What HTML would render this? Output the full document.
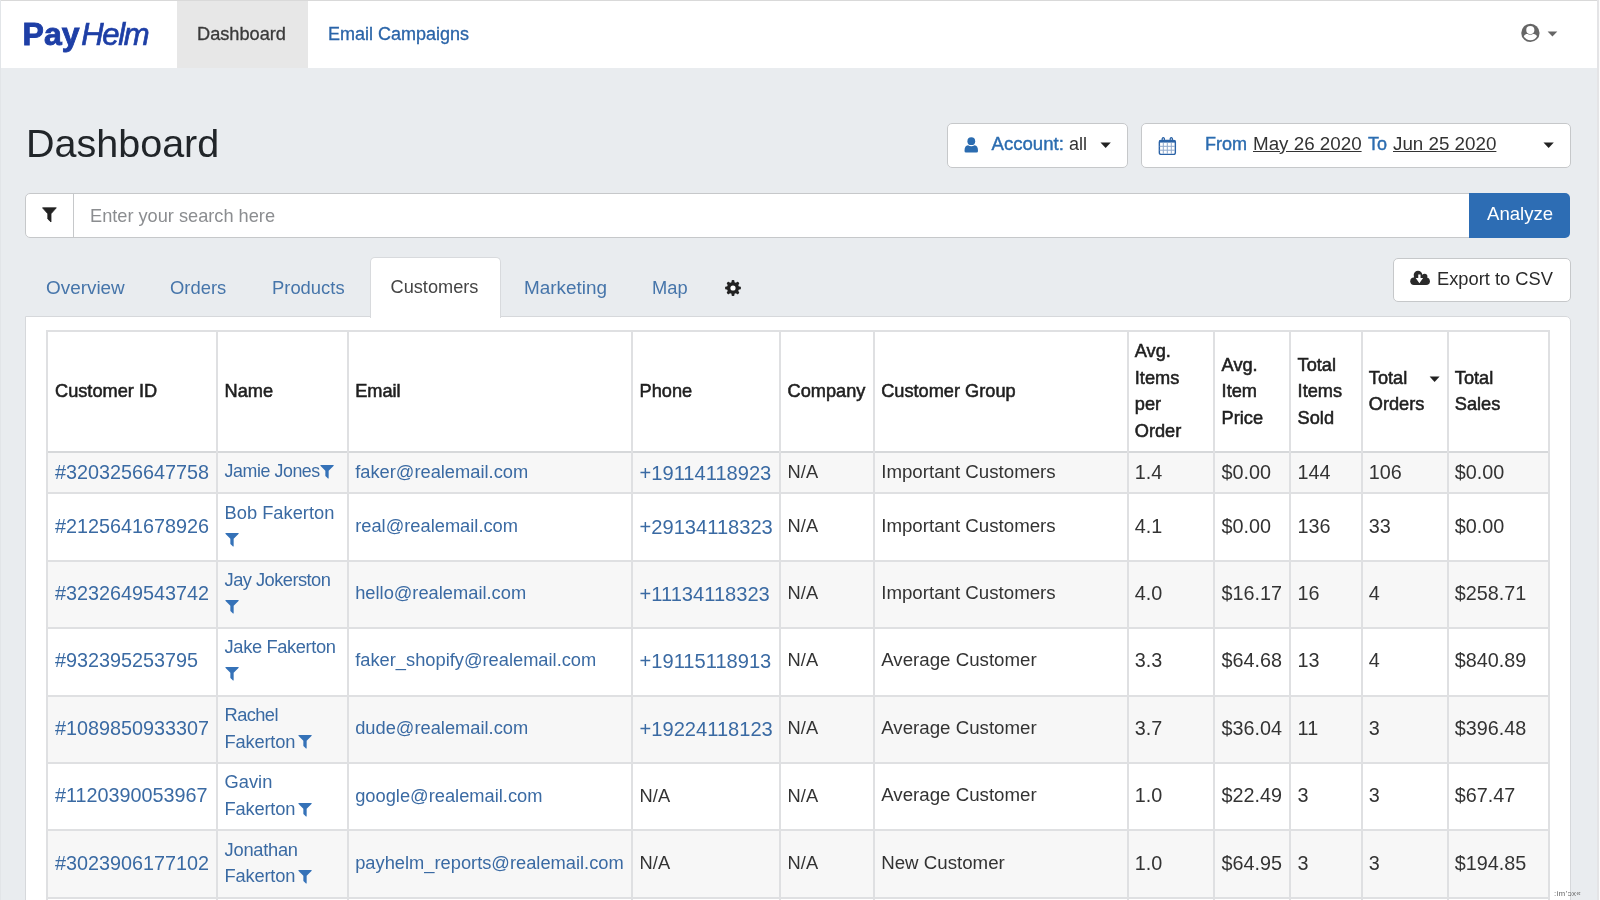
<!DOCTYPE html>
<html><head><meta charset="utf-8">
<style>
*{box-sizing:border-box}
html,body{margin:0;padding:0}
body{width:1600px;height:900px;overflow:hidden;position:relative;background:#e9ecef;font-family:"Liberation Sans",sans-serif;color:#212529}
.abs{position:absolute;white-space:nowrap}
.t{position:absolute;white-space:nowrap;line-height:1}
#topline{left:0;top:0;width:1600px;height:1px;background:#d9d9d9}
#nav{left:0;top:1px;width:1597px;height:67px;background:#fff}
#navact{left:177px;top:1px;width:131px;height:67px;background:#e7e7e7}
#rline{left:1597px;top:0;width:2px;height:900px;background:#e4e4e6}
#rwhite{left:1599px;top:0;width:1px;height:900px;background:#fbfbfb}
.btn{position:absolute;background:#fff;border:1px solid #c6c8ca;border-radius:5px}
.blue{color:#2b6cb0}
.tab{position:absolute;font-size:18.3px;color:#4675aa;line-height:1}
#card{left:25px;top:316px;width:1546px;height:600px;background:#fff;border:1px solid #d6d8db;border-radius:0 5px 0 0}
#lline{left:0;top:0;width:1px;height:900px;background:#e2e5e8}
#acttab{left:370px;top:257px;width:131px;height:61px;background:#fff;border:1px solid #d8dadd;border-bottom:none;border-radius:5px 5px 0 0}
</style></head><body><div id="wrap" style="position:absolute;left:0;top:0;width:1600px;height:900px;will-change:transform">
<div id="topline" class="abs"></div>
<div id="nav" class="abs"></div>
<div id="navact" class="abs"></div>
<div id="lline" class="abs"></div>

<!-- logo -->
<div class="t" style="left:22.5px;top:17.9px;font-size:32px;color:#1e3fa6;font-weight:bold;letter-spacing:0.1px;-webkit-text-stroke:0.9px #1e3fa6">Pay<span style="font-style:italic;font-weight:normal;letter-spacing:-1.3px;font-size:31px;-webkit-text-stroke:0.7px #1e3fa6;margin-left:1.5px">Helm</span></div>

<div class="t" style="left:197px;top:24.5px;font-size:18.2px;color:#3a3a3a;-webkit-text-stroke:0.3px #3a3a3a">Dashboard</div>
<div class="t blue" style="left:328px;top:24.5px;font-size:18px;color:#2a64a8;-webkit-text-stroke:0.3px #2a64a8">Email Campaigns</div>

<!-- user icon -->
<svg class="abs" style="left:1519px;top:21px" width="44" height="24" viewBox="0 0 44 24">
  <circle cx="11.4" cy="11.9" r="9.15" fill="#666"/>
  <circle cx="11.3" cy="9.1" r="4.15" fill="#fff"/>
  <path d="M4.78 15.2 C5.6 13.3 7.8 12.5 11.4 12.5 C15 12.5 17.2 13.3 18.02 15.2 A7.4 7.4 0 0 1 4.78 15.2 Z" fill="#fff"/><circle cx="11.3" cy="9.1" r="4.65" fill="#666"/><circle cx="11.3" cy="9.1" r="4.05" fill="#fff"/>
  <path d="M28.6 10.5 L38.3 10.5 L33.45 15.6 Z" fill="#666"/>
</svg>

<div id="rline" class="abs"></div>
<div id="rwhite" class="abs"></div>

<!-- heading -->
<div class="t" style="left:26px;top:124px;font-size:39.5px;color:#212529">Dashboard</div>

<!-- account button -->
<div class="btn" style="left:947px;top:123px;width:181px;height:45px"></div>
<svg class="abs" style="left:964px;top:137px" width="15" height="16" viewBox="0 0 15 16">
  <circle cx="7.3" cy="4.2" r="3.9" fill="#2b6cb0"/>
  <path d="M0.5 14 Q0.5 8.6 4 8.3 Q7.3 10.2 10.6 8.3 Q14 8.6 14 14 Q14 15.6 12.5 15.6 L2 15.6 Q0.5 15.6 0.5 14Z" fill="#2b6cb0"/>
</svg>
<div class="t" style="left:991.5px;top:135px;font-size:18.6px;color:#2b6cb0;-webkit-text-stroke:0.4px #2b6cb0">Account:</div>
<div class="t" style="left:1069px;top:135px;font-size:18px;color:#333">all</div>
<svg class="abs" style="left:1100px;top:142px" width="12" height="7"><path d="M0.5 0.5 L10.8 0.5 L5.65 6 Z" fill="#222"/></svg>

<!-- date button -->
<div class="btn" style="left:1141px;top:123px;width:430px;height:45px"></div>
<svg class="abs" style="left:1158px;top:136px" width="19" height="19" viewBox="0 0 19 19">
  <rect x="1.35" y="4.4" width="16" height="14" rx="1.6" fill="none" stroke="#2a62a6" stroke-width="1.4"/>
  <rect x="1.35" y="4.4" width="16" height="2.2" fill="#2a62a6"/>
  <path d="M5.3 6.8 V17.8 M9.3 6.8 V17.8 M13.3 6.8 V17.8" stroke="#8fa9cc" stroke-width="1"/>
  <path d="M1.6 10.3 H17 M1.6 14.2 H17" stroke="#8fa9cc" stroke-width="1"/>
  <path d="M4.2 5.5 V2.6 Q5.3 0.5 6.4 2.6 V5.5" fill="none" stroke="#2a62a6" stroke-width="1.2"/>
  <path d="M12.2 5.5 V2.6 Q13.3 0.5 14.4 2.6 V5.5" fill="none" stroke="#2a62a6" stroke-width="1.2"/>
</svg>
<div class="t" style="left:1205px;top:135px;font-size:18px;color:#2b6cb0;-webkit-text-stroke:0.4px #2b6cb0">From</div>
<div class="t" style="left:1253px;top:135px;font-size:18.8px;color:#333;text-decoration:underline">May 26 2020</div>
<div class="t" style="left:1368px;top:135px;font-size:18px;color:#2b6cb0;-webkit-text-stroke:0.4px #2b6cb0">To</div>
<div class="t" style="left:1393px;top:135px;font-size:18.8px;color:#333;text-decoration:underline">Jun 25 2020</div>
<svg class="abs" style="left:1543px;top:142px" width="12" height="7"><path d="M0.5 0.5 L10.8 0.5 L5.65 6 Z" fill="#222"/></svg>

<!-- search -->
<div class="btn" style="left:25px;top:193px;width:1450px;height:45px;border-radius:5px 0 0 5px"></div>
<div class="abs" style="left:73px;top:194px;width:1px;height:43px;background:#c6c8ca"></div>
<svg class="abs" style="left:42px;top:207px" width="15" height="16" viewBox="0 0 15 16">
  <path d="M0.5 0.8 L14.3 0.8 L9 6.8 L9 15 L5.8 12 L5.8 6.8 Z" fill="#222" stroke="#222" stroke-width="0.8" stroke-linejoin="round"/>
</svg>
<div class="t" style="left:90px;top:207px;font-size:18.2px;color:#8b8d90">Enter your search here</div>
<div class="abs" style="left:1469px;top:193px;width:101px;height:45px;background:#2d6db4;border-radius:0 5px 5px 0"></div>
<div class="t" style="left:1487px;top:205px;font-size:18.6px;color:#fff">Analyze</div>

<!-- card & tabs -->
<div id="card" class="abs"></div>
<div id="acttab" class="abs"></div>
<div class="tab" style="left:46px;top:278.5px;font-size:18.9px">Overview</div>
<div class="tab" style="left:170px;top:278.5px;font-size:18.4px">Orders</div>
<div class="tab" style="left:272px;top:278.5px;font-size:18.4px">Products</div>
<div class="tab" style="left:390.5px;top:277.5px;font-size:18.2px;color:#444">Customers</div>
<div class="tab" style="left:524px;top:278.5px;font-size:18.9px">Marketing</div>
<div class="tab" style="left:652px;top:278.5px">Map</div>
<svg class="abs" style="left:724px;top:279px" width="18" height="18" viewBox="-9 -9 18 18">
  <g fill="#222">
    <circle r="6.1"/>
    <rect x="-1.45" y="-7.9" width="2.9" height="15.8" rx="1"/>
    <rect x="-1.45" y="-7.9" width="2.9" height="15.8" rx="1" transform="rotate(45)"/>
    <rect x="-1.45" y="-7.9" width="2.9" height="15.8" rx="1" transform="rotate(90)"/>
    <rect x="-1.45" y="-7.9" width="2.9" height="15.8" rx="1" transform="rotate(135)"/>
  </g>
  <circle r="2.6" fill="#fff"/>
</svg>

<!-- export -->
<div class="btn" style="left:1393px;top:258px;width:178px;height:44px"></div>
<svg class="abs" style="left:1410px;top:270px" width="21" height="16" viewBox="0 0 21 16">
  <g fill="#2a2a2a">
    <circle cx="8.0" cy="5.1" r="4.3"/>
    <circle cx="14.6" cy="6.6" r="2.8"/>
    <circle cx="16.1" cy="11.2" r="3.8"/>
    <circle cx="3.95" cy="11.3" r="3.7"/>
    <rect x="3.9" y="6.5" width="12.2" height="8.5"/>
  </g>
  <path d="M8.25 4.6 H10.55 V8.1 H13.1 L9.4 13.3 L5.7 8.1 H8.25 Z" fill="#fff"/>
</svg>
<div class="t" style="left:1437px;top:270px;font-size:18.3px;color:#2a2a2a">Export to CSV</div>

<div class="t" style="left:1554px;top:889.5px;font-size:8px;color:#6a6a6a;letter-spacing:0.3px">:im’ɔx«</div>
<!--TABLE-->
<div class="abs" style="left:48px;top:453px;width:1500px;height:39px;background:#f7f7f7"></div>
<div class="abs" style="left:48px;top:562px;width:1500px;height:65px;background:#f7f7f7"></div>
<div class="abs" style="left:48px;top:697px;width:1500px;height:65px;background:#f7f7f7"></div>
<div class="abs" style="left:48px;top:831px;width:1500px;height:66px;background:#f7f7f7"></div>
<div class="abs" style="left:46px;top:330px;width:1504px;height:2px;background:#dfe0e2"></div>
<div class="abs" style="left:46px;top:451px;width:1504px;height:2px;background:#d6d8da"></div>
<div class="abs" style="left:46px;top:492px;width:1504px;height:2px;background:#dfe0e2"></div>
<div class="abs" style="left:46px;top:560px;width:1504px;height:2px;background:#dfe0e2"></div>
<div class="abs" style="left:46px;top:627px;width:1504px;height:2px;background:#dfe0e2"></div>
<div class="abs" style="left:46px;top:695px;width:1504px;height:2px;background:#dfe0e2"></div>
<div class="abs" style="left:46px;top:762px;width:1504px;height:2px;background:#dfe0e2"></div>
<div class="abs" style="left:46px;top:829px;width:1504px;height:2px;background:#dfe0e2"></div>
<div class="abs" style="left:46px;top:897px;width:1504px;height:2px;background:#dfe0e2"></div>
<div class="abs" style="left:46px;top:330px;width:2px;height:570px;background:#dfe0e2"></div>
<div class="abs" style="left:216px;top:330px;width:2px;height:570px;background:#dfe0e2"></div>
<div class="abs" style="left:347px;top:330px;width:2px;height:570px;background:#dfe0e2"></div>
<div class="abs" style="left:631px;top:330px;width:2px;height:570px;background:#dfe0e2"></div>
<div class="abs" style="left:779px;top:330px;width:2px;height:570px;background:#dfe0e2"></div>
<div class="abs" style="left:873px;top:330px;width:2px;height:570px;background:#dfe0e2"></div>
<div class="abs" style="left:1127px;top:330px;width:2px;height:570px;background:#dfe0e2"></div>
<div class="abs" style="left:1213px;top:330px;width:2px;height:570px;background:#dfe0e2"></div>
<div class="abs" style="left:1289px;top:330px;width:2px;height:570px;background:#dfe0e2"></div>
<div class="abs" style="left:1361px;top:330px;width:2px;height:570px;background:#dfe0e2"></div>
<div class="abs" style="left:1447px;top:330px;width:2px;height:570px;background:#dfe0e2"></div>
<div class="abs" style="left:1548px;top:330px;width:2px;height:570px;background:#dfe0e2"></div>
<div class="t" style="left:55.00px;top:382.12px;font-size:18.2px;color:#1f1f1f;-webkit-text-stroke:0.55px #1f1f1f;">Customer ID</div>
<div class="t" style="left:224.60px;top:382.12px;font-size:18.2px;color:#1f1f1f;-webkit-text-stroke:0.55px #1f1f1f;">Name</div>
<div class="t" style="left:355.20px;top:382.12px;font-size:18.2px;color:#1f1f1f;-webkit-text-stroke:0.55px #1f1f1f;">Email</div>
<div class="t" style="left:639.60px;top:382.12px;font-size:18.2px;color:#1f1f1f;-webkit-text-stroke:0.55px #1f1f1f;">Phone</div>
<div class="t" style="left:787.60px;top:382.12px;font-size:18.2px;color:#1f1f1f;-webkit-text-stroke:0.55px #1f1f1f;">Company</div>
<div class="t" style="left:881.20px;top:382.12px;font-size:18.2px;color:#1f1f1f;-webkit-text-stroke:0.55px #1f1f1f;">Customer Group</div>
<div class="t" style="left:1134.80px;top:342.44px;font-size:18.2px;color:#1f1f1f;-webkit-text-stroke:0.55px #1f1f1f;">Avg.</div>
<div class="t" style="left:1134.80px;top:368.89px;font-size:18.2px;color:#1f1f1f;-webkit-text-stroke:0.55px #1f1f1f;">Items</div>
<div class="t" style="left:1134.80px;top:395.34px;font-size:18.2px;color:#1f1f1f;-webkit-text-stroke:0.55px #1f1f1f;">per</div>
<div class="t" style="left:1134.80px;top:421.79px;font-size:18.2px;color:#1f1f1f;-webkit-text-stroke:0.55px #1f1f1f;">Order</div>
<div class="t" style="left:1221.60px;top:355.67px;font-size:18.2px;color:#1f1f1f;-webkit-text-stroke:0.55px #1f1f1f;">Avg.</div>
<div class="t" style="left:1221.60px;top:382.12px;font-size:18.2px;color:#1f1f1f;-webkit-text-stroke:0.55px #1f1f1f;">Item</div>
<div class="t" style="left:1221.60px;top:408.57px;font-size:18.2px;color:#1f1f1f;-webkit-text-stroke:0.55px #1f1f1f;">Price</div>
<div class="t" style="left:1297.60px;top:355.67px;font-size:18.2px;color:#1f1f1f;-webkit-text-stroke:0.55px #1f1f1f;">Total</div>
<div class="t" style="left:1297.60px;top:382.12px;font-size:18.2px;color:#1f1f1f;-webkit-text-stroke:0.55px #1f1f1f;">Items</div>
<div class="t" style="left:1297.60px;top:408.57px;font-size:18.2px;color:#1f1f1f;-webkit-text-stroke:0.55px #1f1f1f;">Sold</div>
<div class="t" style="left:1368.80px;top:368.89px;font-size:18.2px;color:#1f1f1f;-webkit-text-stroke:0.55px #1f1f1f;">Total</div>
<div class="t" style="left:1368.80px;top:395.34px;font-size:18.2px;color:#1f1f1f;-webkit-text-stroke:0.55px #1f1f1f;">Orders</div>
<div class="t" style="left:1454.80px;top:368.89px;font-size:18.2px;color:#1f1f1f;-webkit-text-stroke:0.55px #1f1f1f;">Total</div>
<div class="t" style="left:1454.80px;top:395.34px;font-size:18.2px;color:#1f1f1f;-webkit-text-stroke:0.55px #1f1f1f;">Sales</div>
<svg class="abs" style="left:1429px;top:376px" width="12" height="7"><path d="M0.6 0.5 L10.6 0.5 L5.6 6 Z" fill="#222"/></svg>
<div class="t" style="left:55.00px;top:462.86px;font-size:19.8px;color:#3a6aa3;">#3203256647758</div>
<div class="t" style="left:224.60px;top:463.18px;font-size:17.8px;color:#3a6aa3;letter-spacing:-0.42px;">Jamie Jones</div>
<svg class="abs" style="left:320.30px;top:465.10px" width="14.6" height="14.2" viewBox="0 0 15 15" preserveAspectRatio="none"><path d="M0.4 0.9 Q0.1 0.1 0.9 0.1 H13.6 Q14.4 0.1 14.1 0.9 L8.9 6.1 V13.8 Q8.9 14.6 8.2 14.2 L5.8 12 Q5.5 11.7 5.5 11.3 V6.1 Z" fill="#3572b8"/></svg>
<div class="t" style="left:355.20px;top:463.10px;font-size:18.3px;color:#3a6aa3;">faker@realemail.com</div>
<div class="t" style="left:639.60px;top:462.81px;font-size:20.1px;color:#3a6aa3;">+19114118923</div>
<div class="t" style="left:787.60px;top:463.10px;font-size:18.3px;color:#333333;">N/A</div>
<div class="t" style="left:881.20px;top:463.04px;font-size:18.7px;color:#333333;">Important Customers</div>
<div class="t" style="left:1134.80px;top:462.86px;font-size:19.8px;color:#333333;">1.4</div>
<div class="t" style="left:1221.60px;top:462.86px;font-size:19.8px;color:#333333;">$0.00</div>
<div class="t" style="left:1297.60px;top:462.86px;font-size:19.8px;color:#333333;">144</div>
<div class="t" style="left:1368.80px;top:462.86px;font-size:19.8px;color:#333333;">106</div>
<div class="t" style="left:1454.80px;top:462.86px;font-size:19.8px;color:#333333;">$0.00</div>
<div class="t" style="left:55.00px;top:516.56px;font-size:19.8px;color:#3a6aa3;">#2125641678926</div>
<div class="t" style="left:224.60px;top:503.70px;font-size:18.3px;color:#3a6aa3;letter-spacing:0px;">Bob Fakerton</div>
<svg class="abs" style="left:224.60px;top:532.60px" width="14.6" height="14.2" viewBox="0 0 15 15" preserveAspectRatio="none"><path d="M0.4 0.9 Q0.1 0.1 0.9 0.1 H13.6 Q14.4 0.1 14.1 0.9 L8.9 6.1 V13.8 Q8.9 14.6 8.2 14.2 L5.8 12 Q5.5 11.7 5.5 11.3 V6.1 Z" fill="#3572b8"/></svg>
<div class="t" style="left:355.20px;top:516.80px;font-size:18.3px;color:#3a6aa3;">real@realemail.com</div>
<div class="t" style="left:639.60px;top:516.51px;font-size:20.1px;color:#3a6aa3;">+29134118323</div>
<div class="t" style="left:787.60px;top:516.80px;font-size:18.3px;color:#333333;">N/A</div>
<div class="t" style="left:881.20px;top:516.74px;font-size:18.7px;color:#333333;">Important Customers</div>
<div class="t" style="left:1134.80px;top:516.56px;font-size:19.8px;color:#333333;">4.1</div>
<div class="t" style="left:1221.60px;top:516.56px;font-size:19.8px;color:#333333;">$0.00</div>
<div class="t" style="left:1297.60px;top:516.56px;font-size:19.8px;color:#333333;">136</div>
<div class="t" style="left:1368.80px;top:516.56px;font-size:19.8px;color:#333333;">33</div>
<div class="t" style="left:1454.80px;top:516.56px;font-size:19.8px;color:#333333;">$0.00</div>
<div class="t" style="left:55.00px;top:584.16px;font-size:19.8px;color:#3a6aa3;">#3232649543742</div>
<div class="t" style="left:224.60px;top:571.30px;font-size:18.3px;color:#3a6aa3;letter-spacing:-0.54px;">Jay Jokerston</div>
<svg class="abs" style="left:224.60px;top:600.20px" width="14.6" height="14.2" viewBox="0 0 15 15" preserveAspectRatio="none"><path d="M0.4 0.9 Q0.1 0.1 0.9 0.1 H13.6 Q14.4 0.1 14.1 0.9 L8.9 6.1 V13.8 Q8.9 14.6 8.2 14.2 L5.8 12 Q5.5 11.7 5.5 11.3 V6.1 Z" fill="#3572b8"/></svg>
<div class="t" style="left:355.20px;top:584.40px;font-size:18.3px;color:#3a6aa3;">hello@realemail.com</div>
<div class="t" style="left:639.60px;top:584.11px;font-size:20.1px;color:#3a6aa3;">+11134118323</div>
<div class="t" style="left:787.60px;top:584.40px;font-size:18.3px;color:#333333;">N/A</div>
<div class="t" style="left:881.20px;top:584.34px;font-size:18.7px;color:#333333;">Important Customers</div>
<div class="t" style="left:1134.80px;top:584.16px;font-size:19.8px;color:#333333;">4.0</div>
<div class="t" style="left:1221.60px;top:584.16px;font-size:19.8px;color:#333333;">$16.17</div>
<div class="t" style="left:1297.60px;top:584.16px;font-size:19.8px;color:#333333;">16</div>
<div class="t" style="left:1368.80px;top:584.16px;font-size:19.8px;color:#333333;">4</div>
<div class="t" style="left:1454.80px;top:584.16px;font-size:19.8px;color:#333333;">$258.71</div>
<div class="t" style="left:55.00px;top:651.16px;font-size:19.8px;color:#3a6aa3;">#932395253795</div>
<div class="t" style="left:224.60px;top:638.30px;font-size:18.3px;color:#3a6aa3;letter-spacing:-0.37px;">Jake Fakerton</div>
<svg class="abs" style="left:224.60px;top:667.20px" width="14.6" height="14.2" viewBox="0 0 15 15" preserveAspectRatio="none"><path d="M0.4 0.9 Q0.1 0.1 0.9 0.1 H13.6 Q14.4 0.1 14.1 0.9 L8.9 6.1 V13.8 Q8.9 14.6 8.2 14.2 L5.8 12 Q5.5 11.7 5.5 11.3 V6.1 Z" fill="#3572b8"/></svg>
<div class="t" style="left:355.20px;top:651.40px;font-size:18.3px;color:#3a6aa3;">faker_shopify@realemail.com</div>
<div class="t" style="left:639.60px;top:651.11px;font-size:20.1px;color:#3a6aa3;">+19115118913</div>
<div class="t" style="left:787.60px;top:651.40px;font-size:18.3px;color:#333333;">N/A</div>
<div class="t" style="left:881.20px;top:651.34px;font-size:18.7px;color:#333333;">Average Customer</div>
<div class="t" style="left:1134.80px;top:651.16px;font-size:19.8px;color:#333333;">3.3</div>
<div class="t" style="left:1221.60px;top:651.16px;font-size:19.8px;color:#333333;">$64.68</div>
<div class="t" style="left:1297.60px;top:651.16px;font-size:19.8px;color:#333333;">13</div>
<div class="t" style="left:1368.80px;top:651.16px;font-size:19.8px;color:#333333;">4</div>
<div class="t" style="left:1454.80px;top:651.16px;font-size:19.8px;color:#333333;">$840.89</div>
<div class="t" style="left:55.00px;top:718.96px;font-size:19.8px;color:#3a6aa3;">#1089850933307</div>
<div class="t" style="left:224.60px;top:706.10px;font-size:18.3px;color:#3a6aa3;letter-spacing:-0.6px;">Rachel</div>
<div class="t" style="left:224.60px;top:732.50px;font-size:18.3px;color:#3a6aa3;letter-spacing:-0.2px;">Fakerton</div>
<svg class="abs" style="left:297.90px;top:735.20px" width="14.6" height="14.2" viewBox="0 0 15 15" preserveAspectRatio="none"><path d="M0.4 0.9 Q0.1 0.1 0.9 0.1 H13.6 Q14.4 0.1 14.1 0.9 L8.9 6.1 V13.8 Q8.9 14.6 8.2 14.2 L5.8 12 Q5.5 11.7 5.5 11.3 V6.1 Z" fill="#3572b8"/></svg>
<div class="t" style="left:355.20px;top:719.20px;font-size:18.3px;color:#3a6aa3;">dude@realemail.com</div>
<div class="t" style="left:639.60px;top:718.91px;font-size:20.1px;color:#3a6aa3;">+19224118123</div>
<div class="t" style="left:787.60px;top:719.20px;font-size:18.3px;color:#333333;">N/A</div>
<div class="t" style="left:881.20px;top:719.14px;font-size:18.7px;color:#333333;">Average Customer</div>
<div class="t" style="left:1134.80px;top:718.96px;font-size:19.8px;color:#333333;">3.7</div>
<div class="t" style="left:1221.60px;top:718.96px;font-size:19.8px;color:#333333;">$36.04</div>
<div class="t" style="left:1297.60px;top:718.96px;font-size:19.8px;color:#333333;">11</div>
<div class="t" style="left:1368.80px;top:718.96px;font-size:19.8px;color:#333333;">3</div>
<div class="t" style="left:1454.80px;top:718.96px;font-size:19.8px;color:#333333;">$396.48</div>
<div class="t" style="left:55.00px;top:786.26px;font-size:19.8px;color:#3a6aa3;">#1120390053967</div>
<div class="t" style="left:224.60px;top:773.40px;font-size:18.3px;color:#3a6aa3;letter-spacing:0px;">Gavin</div>
<div class="t" style="left:224.60px;top:799.80px;font-size:18.3px;color:#3a6aa3;letter-spacing:-0.2px;">Fakerton</div>
<svg class="abs" style="left:297.90px;top:802.50px" width="14.6" height="14.2" viewBox="0 0 15 15" preserveAspectRatio="none"><path d="M0.4 0.9 Q0.1 0.1 0.9 0.1 H13.6 Q14.4 0.1 14.1 0.9 L8.9 6.1 V13.8 Q8.9 14.6 8.2 14.2 L5.8 12 Q5.5 11.7 5.5 11.3 V6.1 Z" fill="#3572b8"/></svg>
<div class="t" style="left:355.20px;top:786.50px;font-size:18.3px;color:#3a6aa3;">google@realemail.com</div>
<div class="t" style="left:639.60px;top:786.50px;font-size:18.3px;color:#333333;">N/A</div>
<div class="t" style="left:787.60px;top:786.50px;font-size:18.3px;color:#333333;">N/A</div>
<div class="t" style="left:881.20px;top:786.44px;font-size:18.7px;color:#333333;">Average Customer</div>
<div class="t" style="left:1134.80px;top:786.26px;font-size:19.8px;color:#333333;">1.0</div>
<div class="t" style="left:1221.60px;top:786.26px;font-size:19.8px;color:#333333;">$22.49</div>
<div class="t" style="left:1297.60px;top:786.26px;font-size:19.8px;color:#333333;">3</div>
<div class="t" style="left:1368.80px;top:786.26px;font-size:19.8px;color:#333333;">3</div>
<div class="t" style="left:1454.80px;top:786.26px;font-size:19.8px;color:#333333;">$67.47</div>
<div class="t" style="left:55.00px;top:853.56px;font-size:19.8px;color:#3a6aa3;">#3023906177102</div>
<div class="t" style="left:224.60px;top:840.70px;font-size:18.3px;color:#3a6aa3;letter-spacing:-0.26px;">Jonathan</div>
<div class="t" style="left:224.60px;top:867.10px;font-size:18.3px;color:#3a6aa3;letter-spacing:-0.2px;">Fakerton</div>
<svg class="abs" style="left:297.90px;top:869.80px" width="14.6" height="14.2" viewBox="0 0 15 15" preserveAspectRatio="none"><path d="M0.4 0.9 Q0.1 0.1 0.9 0.1 H13.6 Q14.4 0.1 14.1 0.9 L8.9 6.1 V13.8 Q8.9 14.6 8.2 14.2 L5.8 12 Q5.5 11.7 5.5 11.3 V6.1 Z" fill="#3572b8"/></svg>
<div class="t" style="left:355.20px;top:853.80px;font-size:18.3px;color:#3a6aa3;">payhelm_reports@realemail.com</div>
<div class="t" style="left:639.60px;top:853.80px;font-size:18.3px;color:#333333;">N/A</div>
<div class="t" style="left:787.60px;top:853.80px;font-size:18.3px;color:#333333;">N/A</div>
<div class="t" style="left:881.20px;top:853.74px;font-size:18.7px;color:#333333;">New Customer</div>
<div class="t" style="left:1134.80px;top:853.56px;font-size:19.8px;color:#333333;">1.0</div>
<div class="t" style="left:1221.60px;top:853.56px;font-size:19.8px;color:#333333;">$64.95</div>
<div class="t" style="left:1297.60px;top:853.56px;font-size:19.8px;color:#333333;">3</div>
<div class="t" style="left:1368.80px;top:853.56px;font-size:19.8px;color:#333333;">3</div>
<div class="t" style="left:1454.80px;top:853.56px;font-size:19.8px;color:#333333;">$194.85</div>
<!--/TABLE-->
</div></body></html>
